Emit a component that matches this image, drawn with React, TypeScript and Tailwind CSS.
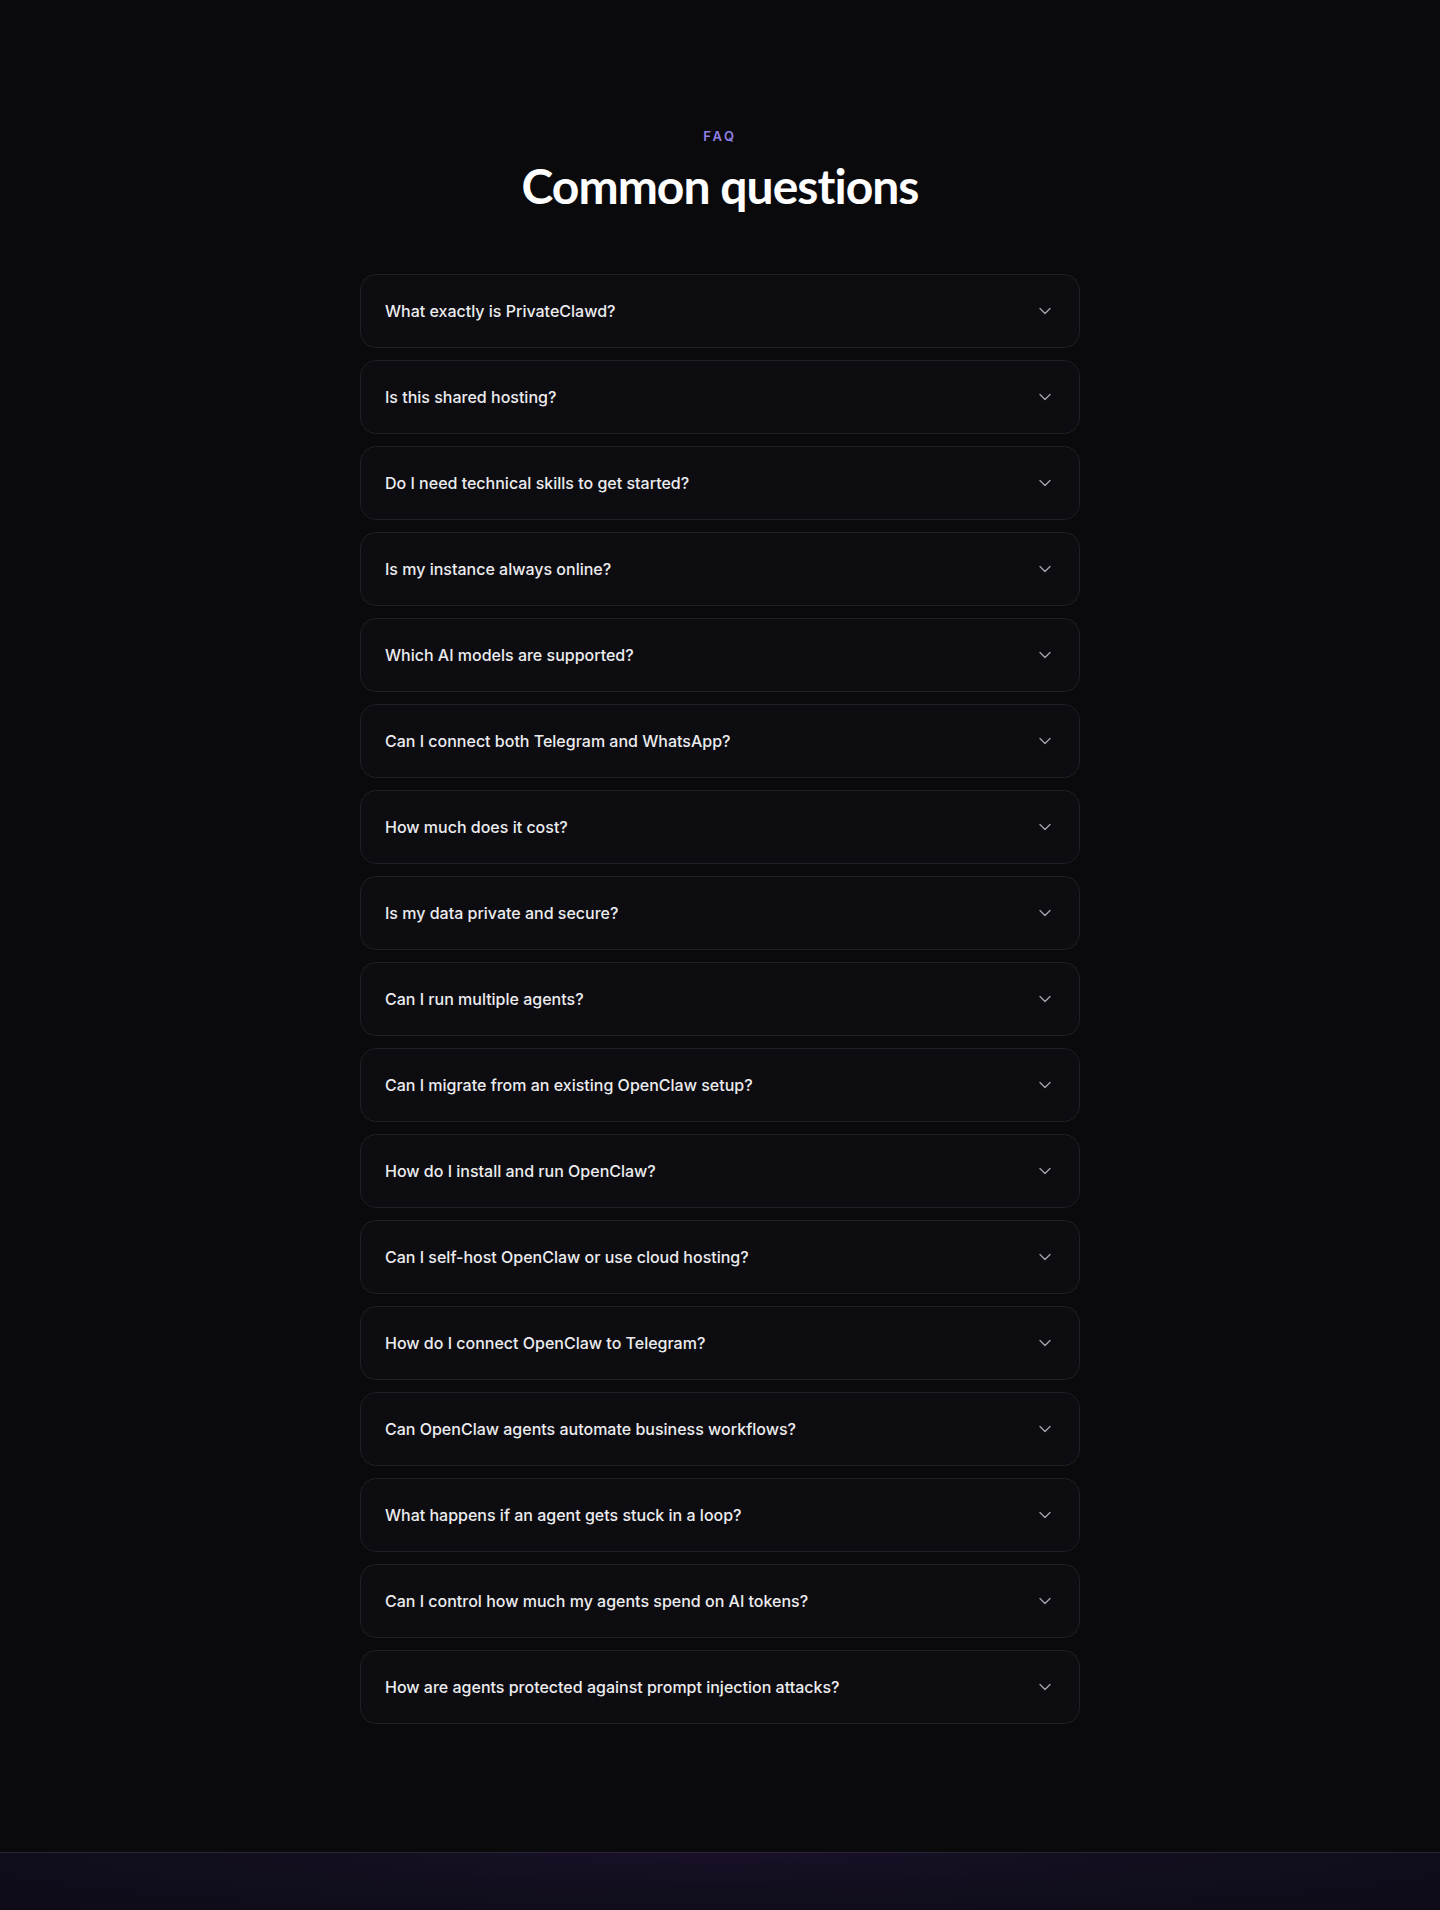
import { ChevronDown } from "lucide-react";

const questions: string[] = [
  "What exactly is PrivateClawd?",
  "Is this shared hosting?",
  "Do I need technical skills to get started?",
  "Is my instance always online?",
  "Which AI models are supported?",
  "Can I connect both Telegram and WhatsApp?",
  "How much does it cost?",
  "Is my data private and secure?",
  "Can I run multiple agents?",
  "Can I migrate from an existing OpenClaw setup?",
  "How do I install and run OpenClaw?",
  "Can I self-host OpenClaw or use cloud hosting?",
  "How do I connect OpenClaw to Telegram?",
  "Can OpenClaw agents automate business workflows?",
  "What happens if an agent gets stuck in a loop?",
  "Can I control how much my agents spend on AI tokens?",
  "How are agents protected against prompt injection attacks?",
];

function FaqItem({ q }: { q: string }) {
  return (
    <button
      type="button"
      className="w-full flex items-center justify-between px-6 py-6 rounded-2xl border border-[#1f1f26] bg-[#0c0c11] text-left"
    >
      <span className="text-base leading-6 font-medium text-[#ececef]">{q}</span>
      <ChevronDown size={20} strokeWidth={1.6} className="text-[#a3a3ad] shrink-0" />
    </button>
  );
}

export default function App() {
  return (
    <div className="min-h-[1910px] bg-[#0a0a0d] font-['Inter',sans-serif]">
      <section className="pt-[126px] pb-32 px-5">
        <div className="max-w-[720px] mx-auto">
          <p className="text-center text-[13px] leading-5 font-semibold uppercase tracking-[0.2em] text-[#8f80e6]">
            FAQ
          </p>
          <h2 className="mt-[14px] text-center text-5xl leading-[1.1] font-bold tracking-[-0.02em] text-white font-['Lato','Inter',sans-serif]">
            Common questions
          </h2>

          <div className="mt-[61px] flex flex-col gap-3">
            {questions.map((q) => (
              <FaqItem key={q} q={q} />
            ))}
          </div>
        </div>
      </section>

      <div className="h-[58px] border-t border-[#2a2838] bg-[radial-gradient(ellipse_at_50%_0%,#1a1128_0%,#120e1f_40%,#0e0c18_100%)]" />
    </div>
  );
}
